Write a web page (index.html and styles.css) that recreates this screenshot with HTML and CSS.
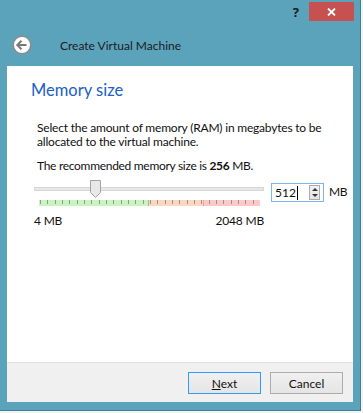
FILE: index.html
```html
<!DOCTYPE html>
<html>
<head>
  <title>Create Virtual Machine</title>
  <link rel="stylesheet" href="styles.css">
</head>
<body>
  <div class="window">
    <div class="caption">
      <span class="help">?</span>
      <button class="close" title="Close">
        <svg width="9" height="8" viewBox="0 0 9 8"><path d="M1 0.5 L8 7.5 M8 0.5 L1 7.5" stroke="#fff" stroke-width="1.8" fill="none"/></svg>
      </button>
    </div>

    <div class="header">
      <span class="back">
        <svg width="20" height="20" viewBox="0 0 20 20">
          <circle cx="10" cy="10" r="8.8" fill="#fff" stroke="#8c8c8c" stroke-width="1.6"/>
          <path d="M5.5 10 H14.5 M9.5 5.8 L5.3 10 L9.5 14.2" stroke="#7a7a7a" stroke-width="2" fill="none"/>
        </svg>
      </span>
      <span class="title">Create Virtual Machine</span>
    </div>

    <div class="panel">
      <div class="page">
        <h2>Memory size</h2>
        <p class="intro">Select the amount of memory (RAM) in megabytes to be<br>allocated to the virtual machine.</p>
        <p class="hint">The recommended memory size is <b>256</b> MB.</p>

        <div class="memory-row">
          <div class="slider">
            <div class="groove">
              <span class="thumb" style="left: 55px;">
                <svg width="11" height="18" viewBox="0 0 11 18"><path d="M0.5 0.5 H10.5 V12.5 L5.5 17.5 L0.5 12.5 Z" fill="#e8e8e8" stroke="#a3a3a3"/></svg>
              </span>
            </div>
            <div class="ticks"></div>
            <div class="scale">
              <span>4 MB</span>
              <span>2048 MB</span>
            </div>
          </div>

          <div class="spin">
            <span class="spin-value">512<i class="caret"></i></span>
            <span class="spin-buttons">
              <span class="arrow up"></span>
              <span class="arrow down"></span>
            </span>
          </div>
          <span class="unit">MB</span>
        </div>
      </div>

      <div class="footer">
        <button class="btn default"><u>N</u>ext</button>
        <button class="btn">Cancel</button>
      </div>
    </div>
  </div>
</body>
</html>
```

FILE: styles.css
```css
:root {
  --frame: #5ba3bb;
  --frame-edge: #3f7e92;
  --heading: #2160c4;
  --text: #111;
}

body {
  margin: 0;
  background: #f4f4f4;
  font-family: Lato, 'Noto Sans', sans-serif;
  font-size: 12px;
  color: var(--text);
}

.window {
  width: 360px;
  height: 410px;
  background: var(--frame);
  border-right: 1px solid var(--frame-edge);
  border-bottom: 1px solid var(--frame-edge);
  display: flex;
  flex-direction: column;
}

/* caption buttons */
.caption {
  height: 24px;
  display: flex;
  justify-content: flex-end;
  align-items: flex-start;
  padding-right: 6px;
}

.help {
  font-family: 'Noto Sans', sans-serif;
  font-weight: bold;
  font-size: 13px;
  line-height: 14px;
  margin-top: 5px;
  margin-right: 10px;
  color: #1a1a1a;
}

.close {
  width: 45px;
  height: 19px;
  margin-top: 2px;
  padding: 0;
  border: none;
  background: #c75050;
  display: flex;
  align-items: center;
  justify-content: center;
}

/* wizard header */
.header {
  height: 42px;
  display: flex;
  align-items: center;
  padding-left: 12px;
}

.back {
  width: 20px;
  height: 20px;
  display: flex;
}

.title {
  margin-left: 28px;
  font-size: 12px;
  color: #1b1b1b;
}

/* white page */
.panel {
  flex: 1;
  margin: 0 7px 8px;
  background: #fff;
  display: flex;
  flex-direction: column;
}

.page {
  flex: 1;
  padding: 13px 0 0 30px;
}

h2 {
  margin: 0 0 0 -6px;
  font-size: 16.5px;
  font-weight: normal;
  line-height: 22px;
  color: var(--heading);
}

p {
  margin: 0;
  line-height: 14px;
  letter-spacing: -0.2px;
}

.intro {
  margin-top: 20px;
}

.hint {
  margin-top: 10px;
  letter-spacing: -0.3px;
}

.memory-row {
  display: flex;
  align-items: flex-start;
  margin: 10px 0 0 -3px;
}

.slider {
  width: 230px;
}

.groove {
  position: relative;
  height: 2px;
  margin-top: 4px;
  background: #e7e7e7;
  border: 1px solid #d6d6d6;
}

.thumb {
  position: absolute;
  top: -8px;
  display: block;
  width: 11px;
  height: 18px;
}

.ticks {
  height: 6px;
  margin: 9px 4px 0 5px;
  background:
    repeating-linear-gradient(90deg, #8d9b88 0 1px, transparent 1px 7.333px) 1px 0 / 100% 4px no-repeat,
    linear-gradient(90deg, #c8f5bf 0 49.5%, #b9b28a 49.5% 50%, #fdd6c1 50% 74%, #f2a494 74% 74.5%, #ffc9c9 74.5%);
}

.scale {
  display: flex;
  justify-content: space-between;
  margin-top: 8px;
  line-height: 14px;
  letter-spacing: -0.2px;
}

.spin {
  width: 51px;
  height: 17px;
  margin-left: 7px;
  border: 1px solid #7eb4ea;
  background: #fff;
  display: flex;
  align-items: center;
  justify-content: space-between;
}

.spin-value {
  padding-left: 3px;
  line-height: 14px;
  display: flex;
  align-items: center;
}

.caret {
  display: inline-block;
  width: 1px;
  height: 14px;
  margin-left: 1px;
  background: #000;
}

.spin-buttons {
  width: 11px;
  height: 15px;
  margin-right: 3px;
  border: 1px solid #acacac;
  box-sizing: border-box;
  background: linear-gradient(#f2f2f2, #e3e3e3);
  display: flex;
  flex-direction: column;
  align-items: center;
  justify-content: space-around;
}

.arrow {
  width: 0;
  height: 0;
  border-left: 3px solid transparent;
  border-right: 3px solid transparent;
}

.arrow.up {
  border-bottom: 3px solid #333;
}

.arrow.down {
  border-top: 3px solid #333;
}

.unit {
  margin-left: 5px;
  line-height: 17px;
  letter-spacing: -0.3px;
}

/* button strip */
.footer {
  height: 30px;
  padding: 9px 10px 0 0;
  border-top: 1px solid #dfdfdf;
  background: #f0f0f0;
  display: flex;
  justify-content: flex-end;
  align-items: flex-start;
  gap: 9px;
}

.btn {
  width: 73px;
  height: 22px;
  padding: 0;
  font-family: inherit;
  font-size: 12px;
  color: #111;
  border: 1px solid #acacac;
  background: linear-gradient(#f0f0f0, #e5e5e5);
}

.btn.default {
  border-color: #3399ff;
}
```
